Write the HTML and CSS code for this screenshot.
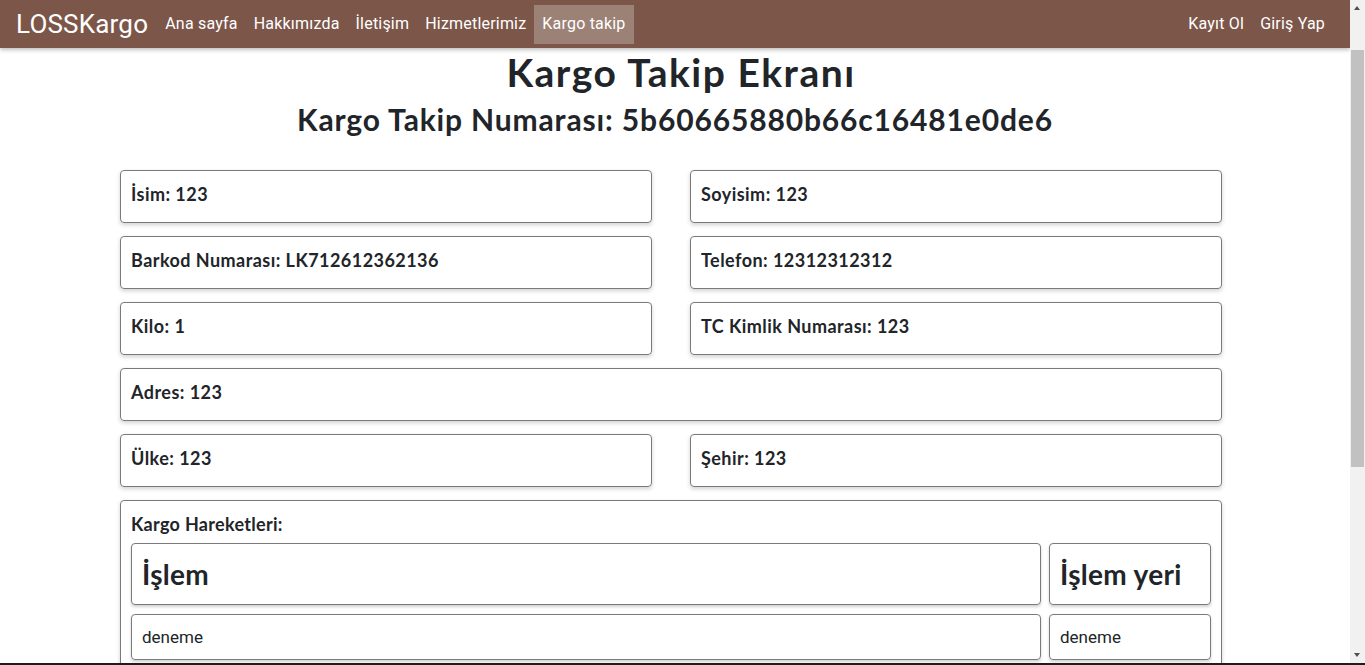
FILE: index.html
```html
<!DOCTYPE html>
<html lang="tr">
<head>
<meta charset="utf-8">
<title>Kargo Takip</title>
<link rel="stylesheet" href="styles.css">
</head>
<body>
<div class="frame">
  <div class="page">
    <nav class="navbar">
      <a class="brand" href="#">LOSSKargo</a>
      <ul class="nav-left">
        <li><a href="#">Ana sayfa</a></li>
        <li><a href="#">Hakkımızda</a></li>
        <li><a href="#">İletişim</a></li>
        <li><a href="#">Hizmetlerimiz</a></li>
        <li><a class="active" href="#">Kargo takip</a></li>
      </ul>
      <ul class="nav-right">
        <li><a href="#">Kayıt Ol</a></li>
        <li><a href="#">Giriş Yap</a></li>
      </ul>
    </nav>
    <main class="container">
      <h1 class="title">Kargo Takip Ekranı</h1>
      <h2 class="subtitle">Kargo Takip Numarası: 5b60665880b66c16481e0de6</h2>
      <div class="grid">
        <div class="card">İsim: 123</div>
        <div class="card">Soyisim: 123</div>
        <div class="card">Barkod Numarası: LK712612362136</div>
        <div class="card">Telefon: 12312312312</div>
        <div class="card">Kilo: 1</div>
        <div class="card">TC Kimlik Numarası: 123</div>
        <div class="card wide">Adres: 123</div>
        <div class="card">Ülke: 123</div>
        <div class="card">Şehir: 123</div>
        <div class="card wide moves">
          <div class="moves-title">Kargo Hareketleri:</div>
          <div class="moves-table">
            <div class="cell head">İşlem</div>
            <div class="cell head">İşlem yeri</div>
            <div class="cell">deneme</div>
            <div class="cell">deneme</div>
          </div>
        </div>
      </div>
    </main>
  </div>
  <div class="scrollbar">
    <div class="sb-arrow up"></div>
    <div class="sb-track"><div class="sb-thumb"></div></div>
    <div class="sb-arrow down"></div>
  </div>
</div>
<div class="taskbar"></div>
</body>
</html>
```
FILE: styles.css
```css
* { box-sizing: border-box; }
html, body { margin: 0; padding: 0; height: 100%; overflow: hidden; }
body {
  font-family: Lato, "Noto Sans", sans-serif;
  color: #212529;
  background: #fff;
  display: flex;
  flex-direction: column;
}
a { text-decoration: none; }
.frame {
  display: flex;
  height: 663px;
  flex: none;
}
.page {
  width: 1350px;
  flex: none;
  overflow: hidden;
}
.scrollbar {
  width: 15px;
  flex: none;
  background: #f1f1f1;
  display: flex;
  flex-direction: column;
  align-items: center;
}
.sb-arrow {
  height: 17px;
  width: 15px;
  flex: none;
  position: relative;
}
.sb-arrow::after {
  content: "";
  position: absolute;
  left: 4px;
  border-left: 3.5px solid transparent;
  border-right: 3.5px solid transparent;
}
.sb-arrow.up::after { top: 6px; border-bottom: 4px solid #505050; }
.sb-arrow.down::after { top: 7px; border-top: 4px solid #505050; }
.sb-track { flex: 1; width: 15px; padding-top: 33px; }
.sb-thumb { width: 13px; height: 417px; margin-left: 1px; background: #c1c1c1; }
.taskbar {
  height: 2px;
  background: #1d1d1d;
  flex: none;
}
.navbar {
  display: flex;
  align-items: center;
  height: 48px;
  background: #7b5649;
  padding: 0 17px 0 16px;
  box-shadow: 0 2px 4px rgba(0,0,0,0.25);
  font-family: Roboto, "Liberation Sans", sans-serif;
  position: relative;
}
.brand {
  color: #fff;
  font-size: 26px;
  margin-right: 9px;
  line-height: 1;
  letter-spacing: 0.2px;
}
.nav-left, .nav-right {
  display: flex;
  list-style: none;
  margin: 0;
  padding: 0;
  height: 100%;
  align-items: center;
}
.nav-right { margin-left: auto; }
.nav-left a, .nav-right a {
  display: block;
  color: #fff;
  font-size: 16px;
  letter-spacing: 0.2px;
  padding: 9px 8px 10px;
  line-height: 20px;
}
.nav-left a.active { background: #9c8176; }
.container {
  width: 1102px;
  margin-left: 120px;
}
.title {
  margin: 0;
  padding-left: 20px;
  text-align: center;
  font-size: 39px;
  letter-spacing: 1.5px;
  line-height: 48px;
  font-weight: 700;
}
.subtitle {
  margin: 5px 0 0;
  padding-left: 8px;
  text-align: center;
  font-size: 30px;
  letter-spacing: 0.85px;
  line-height: 36px;
  font-weight: 700;
}
.grid {
  display: grid;
  grid-template-columns: 532px 532px;
  column-gap: 38px;
  row-gap: 13px;
  margin-top: 33px;
}
.card {
  height: 53px;
  border: 1px solid #7a7a7a;
  border-radius: 4px;
  box-shadow: 0 2px 4px rgba(0,0,0,0.18);
  padding: 11px 10px;
  font-size: 18px;
  letter-spacing: 0.45px;
  font-weight: 700;
  line-height: 24px;
}
.card.wide { grid-column: 1 / -1; }
.moves { height: auto; padding: 10px 10px 20px; }
.moves-title { margin-top: 1px; margin-bottom: 7px; letter-spacing: 0.3px; }
.moves-table {
  display: grid;
  grid-template-columns: 910px 162px;
  column-gap: 8px;
  row-gap: 9px;
}
.cell {
  border: 1px solid #7a7a7a;
  border-radius: 4px;
  box-shadow: 0 2px 3px rgba(0,0,0,0.18);
  height: 46px;
  padding: 0 10px;
  display: flex;
  align-items: center;
  font-family: Roboto, "Liberation Sans", sans-serif;
  font-weight: 400;
  font-size: 17px;
  letter-spacing: 0;
}
.cell.head {
  height: 62px;
  font-family: Lato, "Noto Sans", sans-serif;
  font-weight: 700;
  font-size: 28px;
  letter-spacing: 0.3px;
}
```
